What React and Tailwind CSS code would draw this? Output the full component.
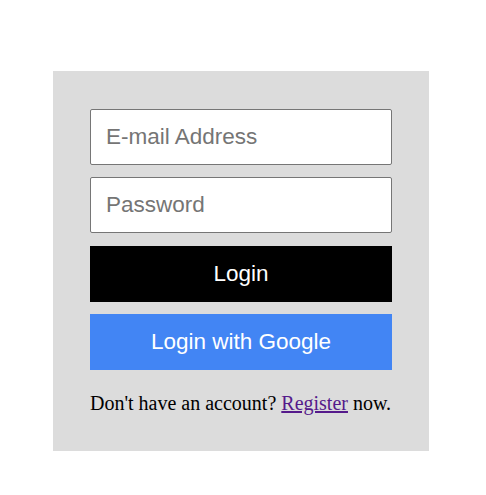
const field =
  "h-[56px] w-full rounded-[2px] border border-[#767676] bg-white px-[15px] font-['Liberation_Sans',Arial,sans-serif] text-[22.5px] text-black placeholder:text-[#757575] outline-none";

export default function App() {
  return (
    <div className="min-h-screen bg-white pt-[71px] pl-[53px]">
      <div className="w-[376px] bg-[#dcdcdc] px-[37px] pt-[38px] pb-[36px]">
        <form className="flex flex-col gap-[12px]" onSubmit={(e) => e.preventDefault()}>
          <input type="email" placeholder="E-mail Address" className={field} />
          <input type="password" placeholder="Password" className={field} />
          <button
            type="submit"
            className="mt-[1px] h-[56px] w-full bg-black font-['Liberation_Sans',Arial,sans-serif] text-[22.5px] text-white"
          >
            Login
          </button>
          <button
            type="button"
            className="h-[56px] w-full bg-[#4285f4] font-['Liberation_Sans',Arial,sans-serif] text-[22.5px] text-white"
          >
            Login with Google
          </button>
        </form>
        <p className="mt-[21px] font-['Liberation_Serif','Times_New_Roman',serif] text-[20px] leading-[24px] text-black">
          Don't have an account?{' '}
          <a href="#register" className="text-[#551a8b] underline">
            Register
          </a>{' '}
          now.
        </p>
      </div>
    </div>
  );
}
